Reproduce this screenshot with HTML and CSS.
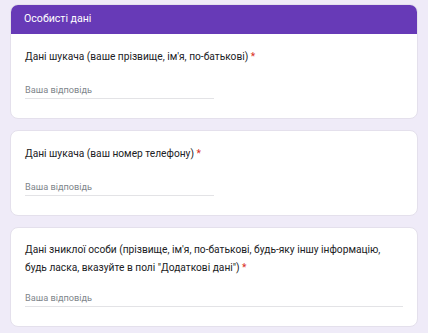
FILE: index.html
```html
<!DOCTYPE html>
<html lang="uk">
<head>
  <meta charset="UTF-8" />
  <meta name="viewport" content="width=device-width, initial-scale=1" />
  <title>Особисті дані</title>
  <link rel="stylesheet" href="styles.css">
</head>
<body>

  <div class="form-page">

    <!-- Section header + first question -->
    <div class="card">
      <div class="section-title">Особисті дані</div>
      <div class="card-body">
        <div class="question">Дані шукача (ваше прізвище, ім'я, по-батькові) <span class="required">*</span></div>
        <input type="text" class="answer" placeholder="Ваша відповідь" />
      </div>
    </div>

    <div class="card">
      <div class="card-body">
        <div class="question">Дані шукача (ваш номер телефону) <span class="required">*</span></div>
        <input type="text" class="answer" placeholder="Ваша відповідь" />
      </div>
    </div>

    <div class="card">
      <div class="card-body">
        <div class="question long">Дані зниклої особи (прізвище, ім'я, по-батькові, будь-яку іншу інформацію, будь ласка, вказуйте в полі "Додаткові дані") <span class="required">*</span></div>
        <input type="text" class="answer wide" placeholder="Ваша відповідь" />
      </div>
    </div>

  </div>

</body>
</html>
```

FILE: styles.css
```css
* {
  box-sizing: border-box;
}

body, html {
  margin: 0;
  height: 100%;
  background: #efebf8;
  font-family: Roboto, 'Noto Sans', sans-serif;
  overflow: hidden;
}

.form-page {
  display: flex;
  flex-direction: column;
  gap: 11px;
  padding: 4px 10px;
}

.card {
  background: #fff;
  border: 1px solid #e4e0ec;
  border-radius: 8px;
  overflow: hidden;
}

.section-title {
  background: #673ab7;
  color: #fff;
  font-size: 10.6px;
  height: 30px;
  line-height: 29px;
  padding: 0 14px;
  margin: -1px -1px 0;
}

.card-body {
  padding: 14px 14px 19px;
}

.question {
  color: #202124;
  font-size: 10.2px;
  line-height: 18px;
}

.question.long {
  margin-top: -1px;
}

.required {
  color: #d93025;
}

.answer {
  display: block;
  width: 50%;
  margin-top: 15px;
  height: 18px;
  padding: 0;
  border: none;
  border-bottom: 1px solid #e3e3e6;
  font-family: inherit;
  font-size: 9.2px;
  color: #202124;
  outline: none;
  background: transparent;
}

.question.long + .answer {
  margin-top: 12px;
}

.answer::placeholder {
  color: #80868b;
}

.answer.wide {
  width: 100%;
}
```
